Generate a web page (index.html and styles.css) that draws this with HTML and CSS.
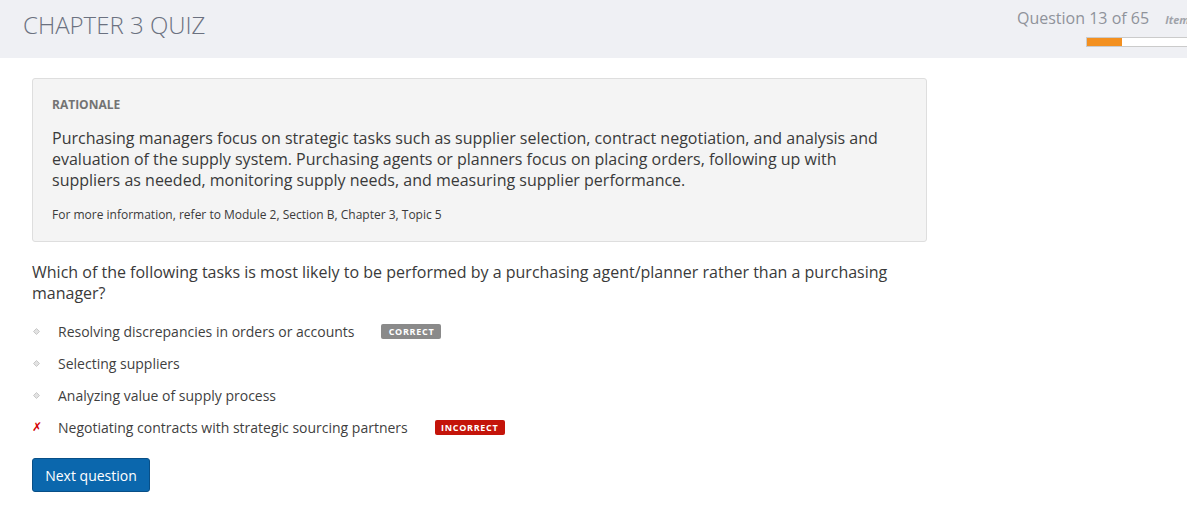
FILE: index.html
```html
<!DOCTYPE html>
<html lang="en">
<head>
<meta charset="utf-8">
<title>Chapter 3 Quiz</title>
<link rel="stylesheet" href="styles.css">
</head>
<body>
<header class="topbar">
  <h1 class="title">CHAPTER 3 QUIZ</h1>
  <div class="progress-area">
    <div class="progress-row">
      <span class="q-count">Question 13 of 65</span>
      <span class="item-label">Item</span>
    </div>
    <div class="progress-bar"><div class="progress-fill" style="width:35px"></div></div>
  </div>
</header>
<main class="content">
  <section class="rationale">
    <div class="rationale-label">RATIONALE</div>
    <p class="rationale-text">Purchasing managers focus on strategic tasks such as supplier selection, contract negotiation, and analysis and evaluation of the supply system. Purchasing agents or planners focus on placing orders, following up with suppliers as needed, monitoring supply needs, and measuring supplier performance.</p>
    <p class="rationale-ref">For more information, refer to Module 2, Section B, Chapter 3, Topic 5</p>
  </section>
  <p class="question">Which of the following tasks is most likely to be performed by a purchasing agent/planner rather than a purchasing manager?</p>
  <ul class="options">
    <li class="option">
      <span class="marker"><svg width="7" height="7" viewBox="0 0 7 7"><path d="M3.5 0.5 L6.5 3.5 L3.5 6.5 L0.5 3.5 Z" fill="#e2e2e2" stroke="#c8c8c8" stroke-width="1"/></svg></span>
      <span class="opt-text">Resolving discrepancies in orders or accounts</span>
      <span class="badge badge-correct">CORRECT</span>
    </li>
    <li class="option">
      <span class="marker"><svg width="7" height="7" viewBox="0 0 7 7"><path d="M3.5 0.5 L6.5 3.5 L3.5 6.5 L0.5 3.5 Z" fill="#e2e2e2" stroke="#c8c8c8" stroke-width="1"/></svg></span>
      <span class="opt-text">Selecting suppliers</span>
    </li>
    <li class="option">
      <span class="marker"><svg width="7" height="7" viewBox="0 0 7 7"><path d="M3.5 0.5 L6.5 3.5 L3.5 6.5 L0.5 3.5 Z" fill="#e2e2e2" stroke="#c8c8c8" stroke-width="1"/></svg></span>
      <span class="opt-text">Analyzing value of supply process</span>
    </li>
    <li class="option">
      <span class="marker marker-wrong">✗</span>
      <span class="opt-text">Negotiating contracts with strategic sourcing partners</span>
      <span class="badge badge-incorrect">INCORRECT</span>
    </li>
  </ul>
  <button class="btn-next" type="button">Next question</button>
</main>
</body>
</html>
```

FILE: styles.css
```css
html, body {
  margin: 0;
  padding: 0;
  background: #ffffff;
  overflow: hidden;
}
body {
  font-family: "Open Sans", "Liberation Sans", sans-serif;
  color: #333;
  width: 1187px;
  height: 505px;
}
.topbar {
  height: 58px;
  background: #eff0f4;
  display: flex;
  justify-content: space-between;
  overflow: hidden;
}
.title {
  margin: 0;
  padding: 9px 0 0 23px;
  font-size: 24px;
  font-weight: 300;
  color: #6b7180;
  line-height: 32px;
}
.progress-area {
  width: 170px;
  flex-shrink: 0;
  padding-top: 7px;
  white-space: nowrap;
}
.progress-row {
  display: flex;
  align-items: baseline;
  gap: 16px;
  line-height: 22px;
}
.q-count {
  font-size: 16px;
  color: #8f939b;
}
.item-label {
  font-size: 11px;
  font-style: italic;
  font-weight: 700;
  color: #a0a3aa;
}
.progress-bar {
  margin: 6px 0 0 69px;
  width: 120px;
  height: 8px;
  background: #fff;
  border: 1px solid #cbcbcb;
}
.progress-fill {
  height: 100%;
  background: #f39020;
}
.content {
  padding: 20px 0 0 32px;
}
.rationale {
  width: 855px;
  background: #f4f4f4;
  border: 1px solid #dedede;
  border-radius: 3px;
  padding: 17px 19px 18px 19px;
}
.rationale-label {
  font-size: 12px;
  font-weight: 700;
  color: #737373;
  line-height: 18px;
}
.rationale-text {
  margin: 14px 0 0 0;
  font-size: 16px;
  line-height: 21px;
  color: #3a3a3a;
}
.rationale-ref {
  margin: 15px 0 0 0;
  font-size: 12px;
  line-height: 17px;
  color: #3a3a3a;
}
.question {
  margin: 20px 0 0 0;
  width: 895px;
  font-size: 16px;
  line-height: 21px;
  color: #3a3a3a;
}
.options {
  list-style: none;
  margin: 11px 0 0 0;
  padding: 0;
}
.option {
  display: flex;
  align-items: center;
  height: 32px;
  font-size: 14px;
  color: #3f3f3f;
}
.marker {
  width: 26px;
  display: flex;
  align-items: center;
}
.marker svg {
  margin-left: 1px;
}
.marker-wrong {
  color: #d40000;
  font-family: "DejaVu Sans", sans-serif;
  font-size: 12px;
  font-weight: 700;
}
.badge {
  box-sizing: border-box;
  margin-left: 27px;
  height: 15px;
  line-height: 15px;
  font-size: 9px;
  font-weight: 700;
  letter-spacing: 0.7px;
  color: #fff;
  border-radius: 2px;
  text-align: center;
}
.badge-correct {
  background: #8a8a8a;
  width: 60px;
}
.badge-incorrect {
  background: #c4140a;
  width: 70px;
}
.btn-next {
  margin-top: 15px;
  width: 118px;
  height: 34px;
  background: #0b67ad;
  color: #fff;
  border: 1px solid #084f87;
  border-radius: 3px;
  font-family: "Open Sans", "Liberation Sans", sans-serif;
  font-size: 14px;
  padding: 0;
}
```
